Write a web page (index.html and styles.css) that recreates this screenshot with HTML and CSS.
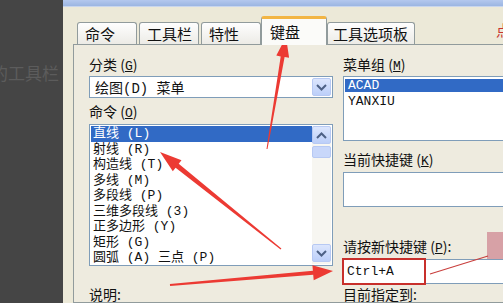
FILE: index.html
```html
<!DOCTYPE html>
<html>
<head>
<meta charset="UTF-8">
<title>自定义 - 键盘</title>
<meta name="viewport" content="width=device-width, initial-scale=1.0">

<link rel="stylesheet" href="styles.css">
</head>
<body>

	<div class="page">

		<!-- 左边暗色区域 -->
		<div class="side">
			<span class="side-text">的工具栏</span>
		</div>

		<div class="dialog">
			<div class="titlebar"></div>

			<div class="tabs">
				<div class="tab">命令</div>
				<div class="tab">工具栏</div>
				<div class="tab">特性</div>
				<div class="tab active">键盘</div>
				<div class="tab">工具选项板</div>
			</div>

			<div class="panel">

				<div class="col col-left">
					<div class="label">分类 (<u>G</u>)</div>
					<div class="combo">
						<span class="combo-text">绘图(D) 菜单</span>
						<span class="sbtn combo-btn">
							<svg width="11" height="7" viewBox="0 0 11 7"><polyline points="1,1 5.5,5.5 10,1" fill="none" stroke="#4d6185" stroke-width="2"/></svg>
						</span>
					</div>

					<div class="label gap-s">命令 (<u>O</u>)</div>
					<div class="list cmd-list">
						<ul class="items">
							<li class="sel">直线 (L)</li>
							<li>射线 (R)</li>
							<li>构造线 (T)</li>
							<li>多线 (M)</li>
							<li>多段线 (P)</li>
							<li>三维多段线 (3)</li>
							<li>正多边形 (Y)</li>
							<li>矩形 (G)</li>
							<li>圆弧 (A) 三点 (P)</li>
						</ul>
						<div class="scrollbar">
							<span class="sbtn">
								<svg width="11" height="7" viewBox="0 0 11 7"><polyline points="1,6 5.5,1.5 10,6" fill="none" stroke="#4d6185" stroke-width="2"/></svg>
							</span>
							<span class="thumb"></span>
							<span class="track"></span>
							<span class="sbtn">
								<svg width="11" height="7" viewBox="0 0 11 7"><polyline points="1,1 5.5,5.5 10,1" fill="none" stroke="#4d6185" stroke-width="2"/></svg>
							</span>
						</div>
					</div>

					<div class="label gap-l">说明:</div>
				</div>

				<div class="col col-right">
					<div class="label">菜单组 (<u>M</u>)</div>
					<ul class="list group-list">
						<li class="sel">ACAD</li>
						<li>YANXIU</li>
					</ul>

					<div class="label gap-m">当前快捷键 (<u>K</u>)</div>
					<div class="box keys-box"></div>

					<div class="label gap-xl">请按新快捷键 (<u>P</u>):</div>
					<div class="box hotkey-box">
						<span class="hotkey-text">Ctrl+A</span>
						<span class="hotkey-mark"></span>
					</div>

					<div class="label gap-xs">目前指定到:</div>
				</div>

			</div>
		</div>

		<span class="corner-text">点</span>
		<span class="pink-note"></span>

		<!-- 红色标注箭头 -->
		<svg class="marks" width="503" height="303" viewBox="0 0 503 303">
			<polygon points="286,37 289.1,57.8 284.6,57.1 267.5,149.1 266.5,148.9 280.7,56.4 276.3,55.6" fill="#ec3a33"/>
			<polygon points="160,152 181.5,160.3 178.7,163.8 281.4,248.5 280.6,249.6 175.6,167.7 172.8,171.2" fill="#ec3a33"/>
			<polygon points="333,271 312.4,265.2 312.9,270.7 169.9,284 170.1,286 313.2,274.7 313.7,280.2" fill="#ec3a33"/>
			<line x1="430" y1="274" x2="488" y2="256" stroke="#c9403e" stroke-width="1.2"/>
		</svg>

	</div>

</body>
</html>
```

FILE: styles.css
```css
body {
	margin: 0;
	background: #454545;
}

.page {
	position: relative;
	display: flex;
	width: 503px;
	height: 303px;
	overflow: hidden;
	font-family: "Noto Sans CJK SC", sans-serif;
	color: #111;
}

/* 左边暗色区域 */
.side {
	width: 63px;
	flex-shrink: 0;
	background: #454545;
}

.side-text {
	display: block;
	margin: 60px 0 0 -9px;
	font-size: 17px;
	color: #5c5c5c;
	white-space: nowrap;
}

.dialog {
	flex: 1;
	display: flex;
	flex-direction: column;
	background: #ece9d8;
	min-width: 0;
}

.titlebar {
	height: 7px;
	background: linear-gradient(#b4c8ee, #9cb6e2);
	border-bottom: 1px solid #c9d6ee;
}

/* 标签页 */
.tabs {
	display: flex;
	align-items: flex-end;
	height: 27px;
	margin: 10px 0 0 14px;
	position: relative;
	z-index: 1;
}

.tab {
	box-sizing: border-box;
	height: 22px;
	min-width: 60px;
	margin-right: 2px;
	padding: 0 6px 0 7px;
	font-size: 15px;
	line-height: 21px;
	border: 1px solid #919b9c;
	border-bottom: none;
	border-radius: 3px 3px 0 0;
	background: linear-gradient(#fefefe, #ecebe6);
}

.tab.active {
	height: 29px;
	min-width: 66px;
	margin: 0 0 -1px -2px;
	padding: 2px 8px 0 8px;
	border-top: 3px solid #f2b544;
	background: #fbfbf9;
}

.tab:last-child {
	padding-left: 5px;
	min-width: 87px;
}

.panel {
	flex: 1;
	display: flex;
	gap: 10px;
	margin-left: 10px;
	padding: 11px 0 0 15px;
	border: 1px solid #919b9c;
	border-right: none;
	background: #eeebdf;
}

.col {
	display: flex;
	flex-direction: column;
	flex-shrink: 0;
}

.col-left {
	width: 244px;
}

.col-right {
	width: 190px;
}

.label {
	height: 16px;
	font-size: 14px;
	line-height: 16px;
	white-space: nowrap;
}

.label u {
	font-family: "Liberation Mono", monospace;
	font-size: 13px;
}

.gap-xs { margin-top: 2px; }
.gap-s { margin-top: 5px; }
.gap-m { margin-top: 10px; }
.gap-l { margin-top: 20px; }
.gap-xl { margin-top: 31px; }

/* 下拉框 */
.combo {
	box-sizing: border-box;
	display: flex;
	align-items: center;
	justify-content: space-between;
	height: 22px;
	margin-top: 4px;
	padding: 1px 1px 1px 5px;
	background: #fff;
	border: 1px solid #7f9db9;
}

.combo-text {
	font-family: "Liberation Mono", "Noto Sans CJK SC", monospace;
	font-size: 14px;
}

.sbtn {
	box-sizing: border-box;
	display: flex;
	align-items: center;
	justify-content: center;
	width: 19px;
	height: 18px;
	border: 1px solid #b7c9f3;
	border-radius: 2px;
	background: linear-gradient(#dce6fd, #bccff9);
}

/* 列表 */
.list {
	box-sizing: border-box;
	margin: 4px 0 0;
	padding: 0;
	list-style: none;
	background: #fff;
	border: 1px solid #7f9db9;
}

.cmd-list {
	display: flex;
	height: 142px;
	margin-top: 5px;
	padding: 1px;
}

.items {
	flex: 1;
	margin: 0;
	padding: 0;
	list-style: none;
	font-family: "Liberation Mono", "Noto Sans CJK SC", monospace;
	font-size: 13px;
	line-height: 15.5px;
}

.items li {
	padding-left: 2px;
	white-space: nowrap;
}

.sel {
	background: #316ac5;
	color: #fff;
}

.scrollbar {
	display: flex;
	flex-direction: column;
	gap: 2px;
	width: 19px;
	padding-bottom: 2px;
	background: #f7f6f1;
}

.thumb {
	height: 12px;
	border: 1px solid #b7c9f3;
	border-radius: 2px;
	background: #c8d7fa;
	box-sizing: border-box;
}

.track {
	flex: 1;
}

.group-list {
	height: 65px;
	padding: 2px 1px;
	font-family: "Liberation Mono", monospace;
	font-size: 13px;
	line-height: 13px;
}

.group-list li {
	padding: 0 3px;
	margin-bottom: 3px;
}

.box {
	box-sizing: border-box;
	margin-top: 5px;
	background: #fff;
	border: 1px solid #7f9db9;
}

.keys-box {
	height: 35px;
}

.hotkey-box {
	position: relative;
	height: 25px;
	padding-left: 3px;
	font-family: "Liberation Mono", monospace;
	font-size: 13px;
	line-height: 23px;
}

.hotkey-mark {
	position: absolute;
	left: -2px;
	top: -2px;
	width: 84px;
	height: 27px;
	border: 2px solid #c8302c;
	box-sizing: border-box;
}

/* 叠加的标注 */
.corner-text {
	position: absolute;
	left: 496px;
	top: 19px;
	font-size: 15px;
	color: #c8332e;
}

.pink-note {
	position: absolute;
	left: 487px;
	top: 232px;
	width: 16px;
	height: 27px;
	background: #d7a1a6;
}

.marks {
	position: absolute;
	left: 0;
	top: 0;
	pointer-events: none;
}
```
